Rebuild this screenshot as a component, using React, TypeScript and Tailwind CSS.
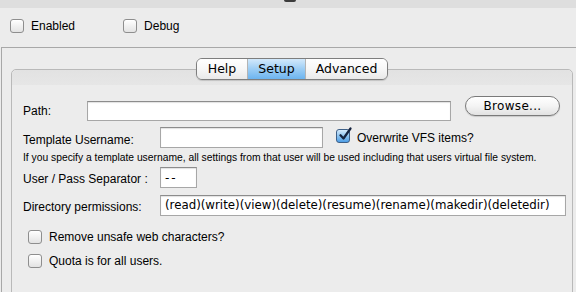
import { ReactNode } from 'react'

const sans = "font-['Liberation_Sans',Arial,sans-serif]"
const lucida = "font-['DejaVu_Sans','Liberation_Sans',sans-serif]"

function Checkbox({ checked = false }: { checked?: boolean }) {
  if (checked) {
    return (
      <div className="relative w-[14px] h-[14px] rounded-[3px] border border-[#3d5f87] bg-gradient-to-b from-[#d6ebfc] via-[#8dc3ef] to-[#4d9ee6] shrink-0">
        <svg viewBox="0 0 14 14" className="absolute -top-[3px] left-[1px] w-[14px] h-[14px]">
          <path d="M2.5 8.2 L5.5 11.5 L12.5 1.5" fill="none" stroke="#15233f" strokeWidth="2.2" strokeLinecap="round" strokeLinejoin="round" />
        </svg>
      </div>
    )
  }
  return (
    <div className="w-[14px] h-[14px] rounded-[3px] border border-[#8e8e8e] bg-gradient-to-b from-[#ffffff] to-[#e3e3e3] shadow-[inset_0_1px_0_#fff] shrink-0" />
  )
}

function CheckItem({ label, checked }: { label: string; checked?: boolean }) {
  return (
    <div className="flex items-center gap-[7px]">
      <Checkbox checked={checked} />
      <span className={`${sans} text-[12px] text-black leading-none`}>{label}</span>
    </div>
  )
}

function Field({ className, children }: { className: string; children?: ReactNode }) {
  return (
    <div className={`bg-white border border-[#a7a7a7] border-t-[#8c8c8c] shadow-[inset_0_1px_1px_rgba(0,0,0,0.12)] flex items-center px-[4px] ${className}`}>
      {children}
    </div>
  )
}

function Label({ children, className = '' }: { children: ReactNode; className?: string }) {
  return <span className={`${sans} text-[12px] text-black leading-none ${className}`}>{children}</span>
}

const tabs = [
  { name: 'Help', w: 'w-[50px]' },
  { name: 'Setup', w: 'w-[58px]', active: true },
  { name: 'Advanced', w: 'w-[82px]' },
]

export default function App() {
  return (
    <div className="w-[576px] h-[292px] overflow-hidden bg-[#ececec] flex flex-col">
      {/* top strip */}
      <div className="h-[8px] bg-[#dedede] relative shrink-0">
        <div className="absolute left-[284px] top-0 w-[12px] h-[2px] rounded-b-[2px] bg-[#3c3c3c]" />
      </div>

      {/* enabled / debug */}
      <div className="h-[39px] flex items-start pt-[11px] pl-[10px] gap-[48px] shrink-0">
        <CheckItem label="Enabled" />
        <CheckItem label="Debug" />
      </div>

      {/* outer panel */}
      <div className="flex-1 ml-px border-t border-l border-[#a8a8a8] pl-[9px] pt-[10px]">
        {/* tabs */}
        <div className="relative z-10 w-[562px] flex justify-center">
          <div className="flex h-[22px] rounded-[6px] border border-[#7e7e7e] overflow-hidden shadow-[0_1px_1px_rgba(0,0,0,0.15)]">
            {tabs.map((t, i) => (
              <div
                key={t.name}
                className={`${t.w} flex items-center justify-center ${lucida} text-[12.5px] text-black ${
                  i > 0 ? 'border-l border-[#b4b4b4]' : ''
                } ${
                  t.active
                    ? 'bg-gradient-to-b from-[#d3e9fb] via-[#9ccdf4] to-[#6cb4ef]'
                    : 'bg-gradient-to-b from-[#ffffff] via-[#f7f7f7] to-[#e9e9e9]'
                }`}
              >
                {t.name}
              </div>
            ))}
          </div>
        </div>

        {/* group box */}
        <div className="-mt-[11px] w-[562px] h-[240px] rounded-[5px] border border-[#b9b9b9] bg-[#ececec] flex flex-col">
          <div className="h-[15px] rounded-t-[5px] bg-gradient-to-b from-[#e2e2e2] to-[#e6e6e6] shrink-0" />

          <div className="flex flex-col pl-[11px]">
            {/* path */}
            <div className="mt-[10px] h-[26px] flex items-start">
              <div className="mt-[6px] h-[20px] w-[64px] flex items-center">
                <Label>Path:</Label>
              </div>
              <Field className="mt-[6px] w-[364px] h-[20px]" />
              <div className={`ml-[14px] mt-px w-[95px] h-[20px] rounded-full border border-[#7a7a7a] bg-gradient-to-b from-[#ffffff] via-[#f4f4f4] to-[#e2e2e2] flex items-center justify-center ${lucida} text-[12px] tracking-[0.3px] text-black shadow-[0_1px_1px_rgba(0,0,0,0.15)]`}>
                Browse...
              </div>
            </div>

            {/* template username */}
            <div className="mt-[6px] h-[21px] flex items-center">
              <div className="w-[137px]">
                <Label>Template Username:</Label>
              </div>
              <Field className="w-[163px] h-[21px]" />
              <div className="ml-[13px] flex items-center gap-[7px]">
                <div className="-mt-[4px]">
                  <Checkbox checked />
                </div>
                <Label>Overwrite VFS items?</Label>
              </div>
            </div>

            {/* help text */}
            <div className="h-[19px] flex items-center pt-px">
              <span className={`${sans} text-[10.3px] text-black leading-none whitespace-nowrap`}>
                If you specify a template username, all settings from that user will be used including that users virtual file system.
              </span>
            </div>

            {/* separator */}
            <div className="h-[21px] flex items-center">
              <div className="w-[137px] -mt-[1px]">
                <Label>User / Pass Separator :</Label>
              </div>
              <Field className="w-[37px] h-[21px]">
                <span className={`${lucida} text-[12px] text-black tracking-[2px]`}>--</span>
              </Field>
            </div>

            {/* directory permissions */}
            <div className="mt-[7px] h-[21px] flex items-center">
              <div className="w-[137px] -mt-[2px]">
                <Label>Directory permissions:</Label>
              </div>
              <Field className="w-[406px] h-[21px]">
                <span className={`${lucida} text-[11.8px] text-black whitespace-nowrap`}>
                  (read)(write)(view)(delete)(resume)(rename)(makedir)(deletedir)
                </span>
              </Field>
            </div>

            {/* options */}
            <div className="mt-[14px] ml-[5px] flex flex-col gap-[10px]">
              <CheckItem label="Remove unsafe web characters?" />
              <CheckItem label="Quota is for all users." />
            </div>
          </div>
        </div>
      </div>
    </div>
  )
}
